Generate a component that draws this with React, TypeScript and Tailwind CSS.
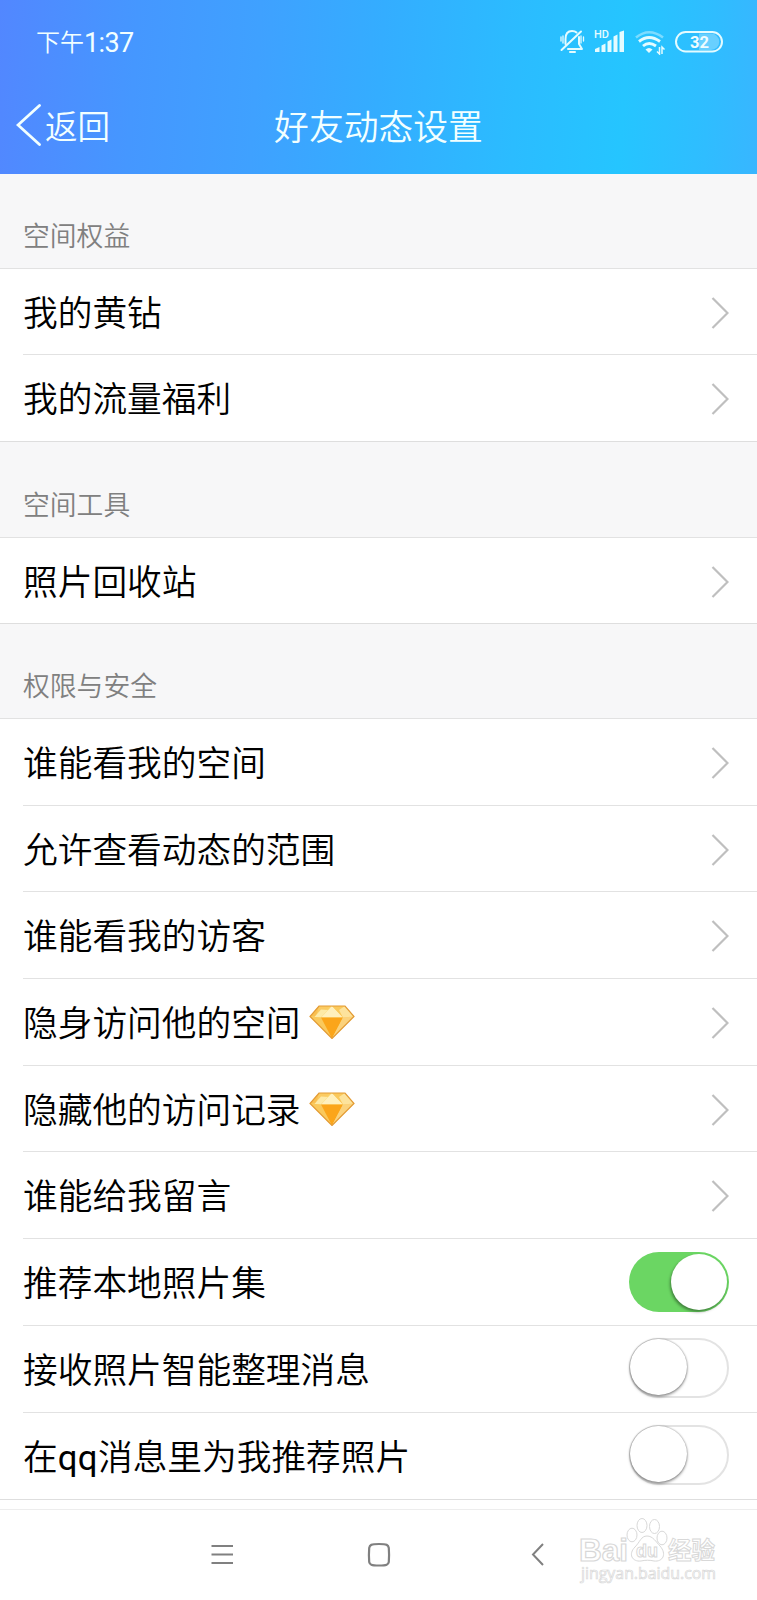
import React from "react";

type Item = { label: React.ReactNode; gem?: boolean; toggle?: boolean };
type Section = { title: string; items: Item[]; head: string; row: string };

const sections: Section[] = [
  {
    title: "空间权益",
    head: "h-[95px]",
    row: "h-[86px]",
    items: [{ label: "我的黄钻" }, { label: "我的流量福利" }],
  },
  {
    title: "空间工具",
    head: "h-[96px]",
    row: "h-[85px]",
    items: [{ label: "照片回收站" }],
  },
  {
    title: "权限与安全",
    head: "h-[95px]",
    row: "h-[86.7px]",
    items: [
      { label: "谁能看我的空间" },
      { label: "允许查看动态的范围" },
      { label: "谁能看我的访客" },
      { label: "隐身访问他的空间", gem: true },
      { label: "隐藏他的访问记录", gem: true },
      { label: "谁能给我留言" },
      { label: "推荐本地照片集", toggle: true },
      { label: "接收照片智能整理消息", toggle: false },
      {
        label: (
          <>
            在<span className="font-normal tracking-[0.4px]">qq</span>消息里为我推荐照片
          </>
        ),
        toggle: false,
      },
    ],
  },
];

function Chevron() {
  return (
    <svg className="mt-[2px] mr-[28.5px] h-8 w-[18px]" viewBox="0 0 18 32" fill="none" stroke="#bfbfbf" strokeWidth="2.2">
      <path d="M1.5 1 16.5 16 1.5 31" />
    </svg>
  );
}

function Gem() {
  return (
    <svg className="ml-[8px] h-[34px] w-[46px]" viewBox="0 0 46 34">
      <path d="M10 1H36L45 11.5 23 33.5 1 11.5Z" fill="#fbd065" />
      <path d="M10 1 14 11.5H1Z" fill="#f9bf50" />
      <path d="M10 1H21L10 11.5H7Z" fill="#fbcb62" />
      <path d="M23 1 34 12.5H12Z" fill="#fff0bd" />
      <path d="M12 4.5 19 5 12 12.5H5Z" fill="#fdeaa8" />
      <path d="M23 1H36L34 12.5Z" fill="#fac95c" />
      <path d="M36 1 45 11.5 34 12.5 30 5Z" fill="#fde39c" />
      <path d="M1 11.5 12 12.5 23 33.5Z" fill="#fac95c" />
      <path d="M12 12.5H34L23 33.5Z" fill="#fba51a" />
      <path d="M34 12.5 45 11.5 23 33.5Z" fill="#fbd27c" />
      <path d="M10 1H36L45 11.5 23 33.5 1 11.5Z" fill="none" stroke="#e39b35" strokeWidth="1.2" />
    </svg>
  );
}

function Toggle({ on }: { on: boolean }) {
  return on ? (
    <div className="mr-[28px] flex h-[60px] w-[100px] items-center justify-end rounded-full bg-[#6bd663] pr-[2.5px]">
      <div className="h-[56px] w-[56px] rounded-full bg-white shadow-[-1px_2px_3px_rgba(0,0,0,0.4)]" />
    </div>
  ) : (
    <div className="mr-[28px] mb-[2px] flex h-[60px] w-[100px] items-start rounded-full border-2 border-[#e3e3e3] bg-white">
      <div className="-mt-px -ml-px h-[56px] w-[57px] rounded-full bg-white shadow-[0_2px_3px_rgba(0,0,0,0.35),0_0_2px_rgba(0,0,0,0.45)]" />
    </div>
  );
}

function StatusIcons() {
  return (
    <svg className="h-[28px] w-[166px]" viewBox="558 26 166 28" fill="none" stroke="#e4fbff">
      <g strokeWidth="2" strokeLinecap="round" strokeLinejoin="round">
        <path d="M565.5 43V38C565.5 32 568 30 572 30C574 30 575.5 30.5 576.5 31.5M579 36V43L582 48H568" />
        <path d="M561.5 49 581 30.5" />
        <path d="M570 51H575" />
        <path d="M561 36V40M563 35V42M581 35V42M583.5 36V40" strokeWidth="1.3" />
      </g>
      <g fill="#e4fbff" stroke="none">
        <path d="M595 51V48L599.5 46V51ZM601.500 51V44.500L605.500 42.500V51ZM607.500 51V40.500L611.500 38.500V51ZM613.500 51V35.500L617.500 33.500V51ZM619.500 51V31L624 29.500V51Z" />
        <text x="594" y="37" className="font-['Roboto'] text-[11px] font-medium">HD</text>
        <path d="M645.500 48.500 649 52 652.500 48.500Q649 45.500 645.500 48.500Z" />
      </g>
      <path d="M636 36.500Q649 26 663 36.500" strokeWidth="2.600" opacity="0.45" />
      <path d="M639 40.500Q649 32.500 660 40.500M643 45Q649 40 656 45" strokeWidth="2.900" />
      <path d="M659.500 46V53L657 50.500M662 53V46L664.500 48.500" strokeWidth="1.500" />
      <path d="M699 32.500H711A8 8 0 0 1 711 49H699Z" fill="#8fdcff" stroke="none" opacity="0.6" />
      <rect x="676" y="31" width="46" height="19.500" rx="9.700" strokeWidth="2" />
      <text x="699.500" y="46.500" textAnchor="middle" fill="#effcff" stroke="none" className="font-['Roboto'] text-[16.500px] font-bold">32</text>
    </svg>
  );
}

function Watermark() {
  return (
    <svg className="h-[72px] w-[150px]" viewBox="0 0 150 72" fill="#fff" stroke="#d8d8d8" strokeWidth="1">
      <text x="4" y="43" textLength="49" lengthAdjust="spacingAndGlyphs" strokeWidth="1.2" className="font-['Liberation_Sans'] text-[32px] font-bold">Bai</text>
      <ellipse cx="57" cy="17" rx="5" ry="6.8" />
      <ellipse cx="67" cy="7.5" rx="5" ry="7" />
      <ellipse cx="79.5" cy="8.5" rx="5" ry="7" />
      <ellipse cx="87" cy="20" rx="5" ry="6.8" />
      <path d="M72 18C78 18 81 24 85 28C92 36 88 44 79 43C75 42 70 42 66 43C57 44 53 36 60 29C65 24 66 18 72 18Z" />
      <text x="61" y="39" textLength="22" lengthAdjust="spacingAndGlyphs" className="font-['Liberation_Sans'] text-[19px] font-bold">du</text>
      <text x="93" y="41" textLength="47" lengthAdjust="spacingAndGlyphs" className="font-['Noto_Sans_CJK_SC',sans-serif] text-[24px] font-bold">经验</text>
      <text x="6" y="61" textLength="135" lengthAdjust="spacingAndGlyphs" strokeWidth="0.7" className="font-['Open_Sans'] text-[16px] font-normal">jingyan.baidu.com</text>
    </svg>
  );
}

export default function App() {
  return (
    <div className="flex h-[1600px] w-[757px] flex-col overflow-hidden bg-white font-['Roboto','Noto_Sans_CJK_SC',sans-serif] font-[350] text-black">
      <header className="h-[174px] shrink-0 bg-[linear-gradient(94deg,#5287ff_0%,#4597ff_18%,#3fa1ff_34%,#34adff_50%,#2bbcff_68%,#25c5ff_82%,#2fbdff_93%,#38b6ff_100%)] text-[#f2ffff]">
        <div className="flex h-[82px] items-center justify-between pr-[33px] pl-[36px]">
          <div className="flex items-center pt-[3px]">
            <span className="text-[24px] leading-[30px]">下午</span>
            <span className="text-[27px] leading-[30px] font-normal tracking-[-0.6px]">1:37</span>
          </div>
          <StatusIcons />
        </div>
        <div className="grid h-[88px] grid-cols-[1fr_auto_1fr] items-center">
          <div className="flex items-center pl-[16px]">
            <svg className="-mt-[2px] h-[42px] w-[26px]" viewBox="0 0 26 42" fill="none" stroke="currentColor" strokeWidth="2.8" strokeLinecap="round">
              <path d="M23.5 1.5 2 21 23.5 40.5" />
            </svg>
            <span className="ml-[3px] pt-[3px] text-[32.5px] leading-[40px]">返回</span>
          </div>
          <h1 className="pt-[3px] text-[34.8px] leading-[40px]">好友动态设置</h1>
        </div>
      </header>

      <main className="h-[1335px] shrink-0 overflow-hidden">
        {sections.map((s) => (
          <section key={s.title}>
            <h2 className={`flex items-end border-b border-[#e2e2e2] bg-[#f7f7f8] pb-[11px] pl-[23px] text-[26.8px] leading-[40px] text-[#808080] ${s.head}`}>
              {s.title}
            </h2>
            <ul className="border-b border-[#dedede]">
              {s.items.map((it, i) => (
                <li key={i} className={`ml-[23px] flex items-center justify-between ${s.row} ${i < s.items.length - 1 ? "border-b border-[#e2e2e2]" : ""}`}>
                  <span className="flex items-center text-[34.7px] leading-[48px]">
                    <span className="pt-[4px]">{it.label}</span>
                    {it.gem && <Gem />}
                  </span>
                  {it.toggle === undefined ? <Chevron /> : <Toggle on={it.toggle} />}
                </li>
              ))}
            </ul>
          </section>
        ))}
      </main>

      <nav className="flex h-[91px] shrink-0 items-start border-t border-[#ededed] bg-white">
        <svg className="mt-[33px] ml-[208px] h-[24px] w-[28px]" viewBox="0 0 28 24" stroke="#808080" strokeWidth="2">
          <path d="M3.5 3H25M3.5 11.5H25M3.5 20H25" />
        </svg>
        <svg className="mt-[32px] ml-[129.5px] h-[26px] w-[26px]" viewBox="0 0 26 26" fill="none" stroke="#808080" strokeWidth="2.2">
          <path d="M13 2C21 2 22.3 3 22.8 6C23.2 11 23.2 15 22.8 20C22.3 22.5 21 23.5 13 23.5C5 23.5 3.7 22.5 3.2 20C2.8 15 2.8 11 3.2 6C3.7 3 5 2 13 2Z" />
        </svg>
        <svg className="mt-[32px] ml-[139.5px] h-[26px] w-[14px]" viewBox="0 0 14 26" fill="none" stroke="#808080" strokeWidth="2">
          <path d="M12 2 2 12.5 12 23" />
        </svg>
        <div className="mt-[8px] ml-[30px]">
          <Watermark />
        </div>
      </nav>
    </div>
  );
}
